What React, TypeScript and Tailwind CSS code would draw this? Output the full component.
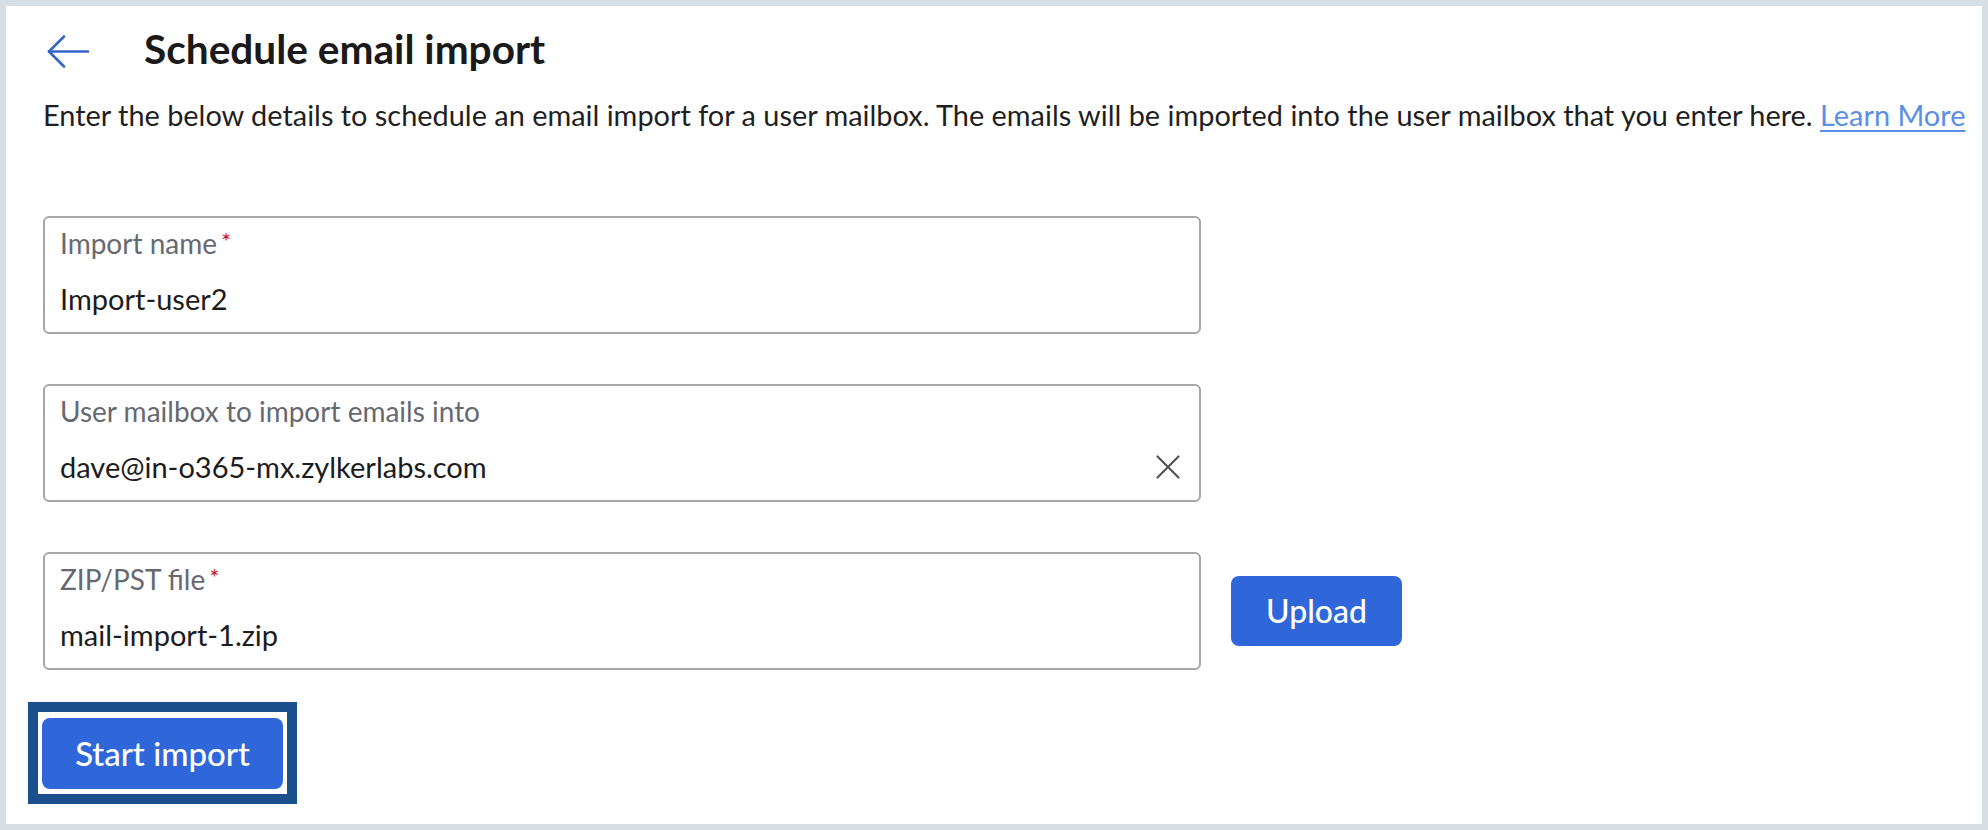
const Field = ({
  label,
  value,
  required,
  clearable,
}: {
  label: string;
  value: string;
  required?: boolean;
  clearable?: boolean;
}) => (
  <div className="flex h-[118px] w-[1158px] rounded-[6px] border-2 border-[#a7a7a7] pl-[15px] pr-[19px] pt-[9px]">
    <div className="flex flex-1 flex-col">
      <div className="flex text-[28px] leading-[32px] text-[#666a70]">
        <span>{label}</span>
        {required && <span className="ml-[4px] mt-[2px] text-[24px] leading-[24px] text-[#c8161d]">*</span>}
      </div>
      <div className="mt-[23px] text-[29px] leading-[34px] text-[#1c1c1c]">{value}</div>
    </div>
    {clearable && (
      <button className="mb-[21px] self-end text-[#555]">
        <svg width="24" height="24" viewBox="0 0 24 24" fill="none" stroke="currentColor" strokeWidth="2.2" strokeLinecap="round">
          <path d="M1.5 1.5L22.5 22.5M22.5 1.5L1.5 22.5" />
        </svg>
      </button>
    )}
  </div>
);

export default function App() {
  return (
    <div className="h-[830px] w-full bg-[#d6dee4] p-[6px] font-[Lato,sans-serif]">
      <div className="flex h-full flex-col bg-white pl-[37px] pt-[19px]">
        <div className="flex h-[48px] items-center">
          <button className="ml-[4px] mt-[4px] text-[#3566c6]">
            <svg width="42" height="33" viewBox="0 0 42 33" fill="none" stroke="currentColor" strokeWidth="2.6" strokeLinecap="round" strokeLinejoin="round">
              <path d="M41 16.5H2" />
              <path d="M17 1.5L2 16.5L17 31.5" />
            </svg>
          </button>
          <h1 className="ml-[55px] text-[40.6px] font-bold leading-[48px] text-[#1a1a1a]">Schedule email import</h1>
        </div>

        <p className="mt-[25px] whitespace-nowrap text-[28.9px] leading-[34px] text-[#1f1f1f]">
          Enter the below details to schedule an email import for a user mailbox. The emails will be imported into the user mailbox that you enter here.{' '}
          <a className="text-[#5a8ee9] underline underline-offset-[4px]">Learn More</a>
        </p>

        <div className="mt-[84px] flex flex-col gap-[50px]">
          <Field label="Import name" value="Import-user2" required />
          <Field label="User mailbox to import emails into" value="dave@in-o365-mx.zylkerlabs.com" clearable />
          <div className="flex items-center gap-[30px]">
            <Field label="ZIP/PST file" value="mail-import-1.zip" required />
            <button className="h-[70px] w-[171px] rounded-[8px] bg-[#2f67db] text-[32px] font-medium text-white">
              Upload
            </button>
          </div>
        </div>

        <div className="-ml-[15px] mt-[32px] w-fit border-[10px] border-[#1c4f8d] bg-white px-[4px] pb-[5px] pt-[6px]">
          <button className="h-[71px] w-[241px] rounded-[8px] bg-[#2f67db] text-[33px] font-medium text-white">
            Start import
          </button>
        </div>
      </div>
    </div>
  );
}
